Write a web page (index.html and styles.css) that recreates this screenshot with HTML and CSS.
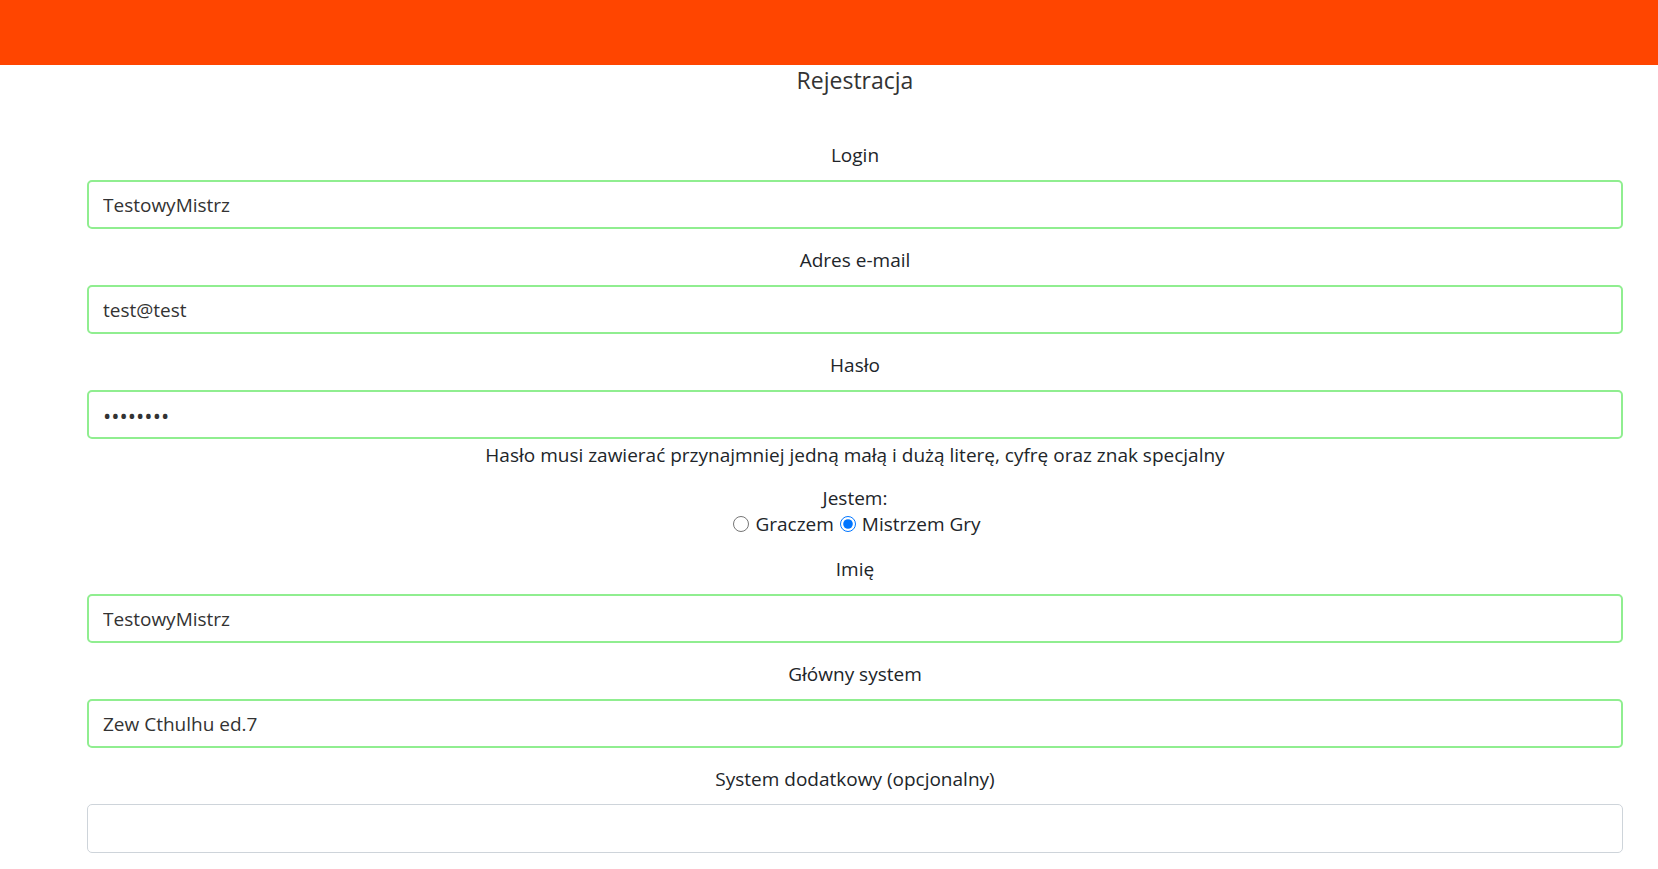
FILE: index.html
```html
<!DOCTYPE html>
<html lang="pl">
<head>
<meta charset="utf-8">
<title>Rejestracja</title>
<link rel="stylesheet" href="styles.css">
</head>
<body>
<header class="topbar"></header>
<main class="page">
  <h4 class="title">Rejestracja</h4>
  <form class="form">
    <div class="group">
      <label class="label" for="login">Login</label>
      <input class="control valid" id="login" type="text" value="TestowyMistrz">
    </div>
    <div class="group">
      <label class="label" for="email">Adres e-mail</label>
      <input class="control valid" id="email" type="text" value="test@test">
    </div>
    <div class="group group-pass">
      <label class="label" for="pass">Hasło</label>
      <input class="control valid password" id="pass" type="password" value="12345678">
      <div class="hint">Hasło musi zawierać przynajmniej jedną małą i dużą literę, cyfrę oraz znak specjalny</div>
    </div>
    <div class="role">
      <div class="role-title">Jestem:</div>
      <div class="role-options">
        <input class="radio" type="radio" name="role" id="r1"><label for="r1">Graczem</label>
        <input class="radio" type="radio" name="role" id="r2" checked><label for="r2">Mistrzem Gry</label>
      </div>
    </div>
    <div class="group">
      <label class="label" for="name">Imię</label>
      <input class="control valid" id="name" type="text" value="TestowyMistrz">
    </div>
    <div class="group">
      <label class="label" for="sys">Główny system</label>
      <input class="control valid" id="sys" type="text" value="Zew Cthulhu ed.7">
    </div>
    <div class="group">
      <label class="label" for="sys2">System dodatkowy (opcjonalny)</label>
      <input class="control" id="sys2" type="text" value="">
    </div>
  </form>
</main>
</body>
</html>
```
FILE: styles.css
```css
html, body {
  margin: 0;
  padding: 0;
  background: #fff;
}
body {
  font-family: "Open Sans", "Noto Sans", sans-serif;
  font-size: 19px;
  line-height: 30px;
  color: #212529;
  overflow: hidden;
}
.topbar {
  height: 65px;
  background: #ff4500;
}
.page {
  padding: 0 35px 0 87px;
}
.title {
  margin: 0;
  padding-top: 0;
  font-size: 23px;
  line-height: 30px;
  font-weight: 400;
  color: #333;
  text-align: center;
}
.form {
  margin-top: 45px;
  text-align: center;
}
.group {
  display: flex;
  flex-direction: column;
  margin-bottom: 16px;
}
.group-pass {
  margin-bottom: 0;
}
.label {
  display: block;
  margin-bottom: 10px;
  line-height: 30px;
}
.control {
  box-sizing: border-box;
  height: 49px;
  width: 100%;
  margin: 0;
  padding: 7px 14px;
  font: inherit;
  color: #333;
  background: #fff;
  border: 1px solid #ced4da;
  border-radius: 5px;
  outline: none;
}
.control.valid {
  border: 2px solid #90ee90;
}
.password {
  font-size: 22px;
}
.hint {
  margin-top: 1px;
  line-height: 30px;
}
.role {
  margin-top: 15px;
  margin-bottom: 17px;
  line-height: 26px;
}
.role-options {
  display: flex;
  justify-content: center;
  align-items: center;
}
.radio {
  width: 16px;
  height: 16px;
  margin: 0 6px 0 4px;
  accent-color: #0075ff;
}
.radio + label + .radio {
  margin-left: 6px;
}
```
